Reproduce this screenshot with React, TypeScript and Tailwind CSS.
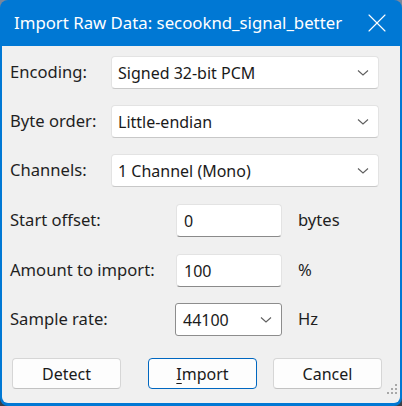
import { X } from 'lucide-react'

const font = { fontFamily: '"Noto Sans", "Open Sans", sans-serif' }

function Chevron() {
  return (
    <svg width="12" height="8" viewBox="0 0 12 8" className="shrink-0">
      <path d="M1 1.5 L6 6 L11 1.5" fill="none" stroke="#5f5f5f" strokeWidth="1.1" />
    </svg>
  )
}

function Combo({ value, className }: { value: string; className: string }) {
  return (
    <div
      className={`flex h-[33px] items-center justify-between rounded-[4px] border border-[#e3e3e3] border-b-[#c8c8c8] bg-white pl-[6px] pr-[9px] text-[16px] text-[#1a1a1a] ${className}`}
    >
      <span>{value}</span>
      <Chevron />
    </div>
  )
}

function TextBox({ value }: { value: string }) {
  return (
    <div className="flex h-[33px] w-[106px] items-center rounded-[4px] border border-[#e3e3e3] border-b-[#8a8a8a] bg-white pl-[7px] text-[16px] text-[#1a1a1a]">
      {value}
    </div>
  )
}

function Button({ label, primary }: { label: React.ReactNode; primary?: boolean }) {
  return (
    <button
      className={`flex h-[31px] w-[109px] items-center justify-center rounded-[4px] bg-[#fdfdfd] text-[16px] text-[#1a1a1a] ${
        primary ? 'border-[1.5px] border-[#0067c0]' : 'border border-[#d6d6d6] border-b-[#c2c2c2]'
      }`}
    >
      {label}
    </button>
  )
}

export default function App() {
  return (
    <div className="h-[406px] w-[402px] bg-gradient-to-b from-[#7b879b] to-[#3a3f47]" style={font}>
      <div className="flex h-full flex-col rounded-[8px] bg-[#0078d4]">
        {/* Title bar */}
        <div className="flex h-[46px] shrink-0 items-center justify-between pl-[14px] pr-[9px] text-white">
          <span className="text-[16.8px] leading-none">Import Raw Data: secooknd_signal_better</span>
          <X className="h-[32px] w-[32px]" strokeWidth={0.85} />
        </div>

        {/* Body */}
        <div className="mx-[2px] mb-[3px] flex flex-1 flex-col rounded-b-[6px] bg-[#f0f0f0] pl-[8px] pt-[10px] text-[16.6px] text-[#1f1f1f]">
          <div className="flex flex-col gap-4">
            <div className="flex h-[33px] items-center">
              <span className="w-[101px]">Encoding:</span>
              <Combo value="Signed 32-bit PCM" className="w-[268px]" />
            </div>
            <div className="flex h-[33px] items-center">
              <span className="w-[101px]">Byte order:</span>
              <Combo value="Little-endian" className="w-[268px]" />
            </div>
            <div className="flex h-[33px] items-center">
              <span className="w-[101px]">Channels:</span>
              <Combo value="1 Channel (Mono)" className="w-[268px]" />
            </div>
            <div className="mt-px flex h-[33px] items-center">
              <span className="w-[166px]">Start offset:</span>
              <TextBox value="0" />
              <span className="ml-[16px]">bytes</span>
            </div>
            <div className="mt-px flex h-[33px] items-center">
              <span className="w-[166px]">Amount to import:</span>
              <TextBox value="100" />
              <span className="ml-[16px]">%</span>
            </div>
            <div className="flex h-[33px] items-center">
              <span className="w-[165px]">Sample rate:</span>
              <div className="flex h-[33px] w-[107px] items-center justify-between rounded-[3px] border border-[#8d8d8d] bg-white pl-[7px] pr-[9px] text-[16px] text-[#1a1a1a]">
                <span>44100</span>
                <Chevron />
              </div>
              <span className="ml-[16px]">Hz</span>
            </div>
          </div>

          {/* Buttons */}
          <div className="relative mt-[22px] flex items-center pl-[2px]">
            <Button label="Detect" />
            <div className="ml-[27px]">
              <Button
                primary
                label={
                  <span>
                    <span className="underline underline-offset-[3px]">I</span>mport
                  </span>
                }
              />
            </div>
            <div className="ml-[16px]">
              <Button label="Cancel" />
            </div>
            <svg width="12" height="12" viewBox="0 0 12 12" className="absolute right-[2px] top-[25px]">
              {[
                [9, 1],
                [5, 5],
                [9, 5],
                [1, 9],
                [5, 9],
                [9, 9],
              ].map(([x, y]) => (
                <rect key={`${x}-${y}`} x={x} y={y} width="2" height="2" fill="#a8a8a8" />
              ))}
            </svg>
          </div>
        </div>
      </div>
    </div>
  )
}
